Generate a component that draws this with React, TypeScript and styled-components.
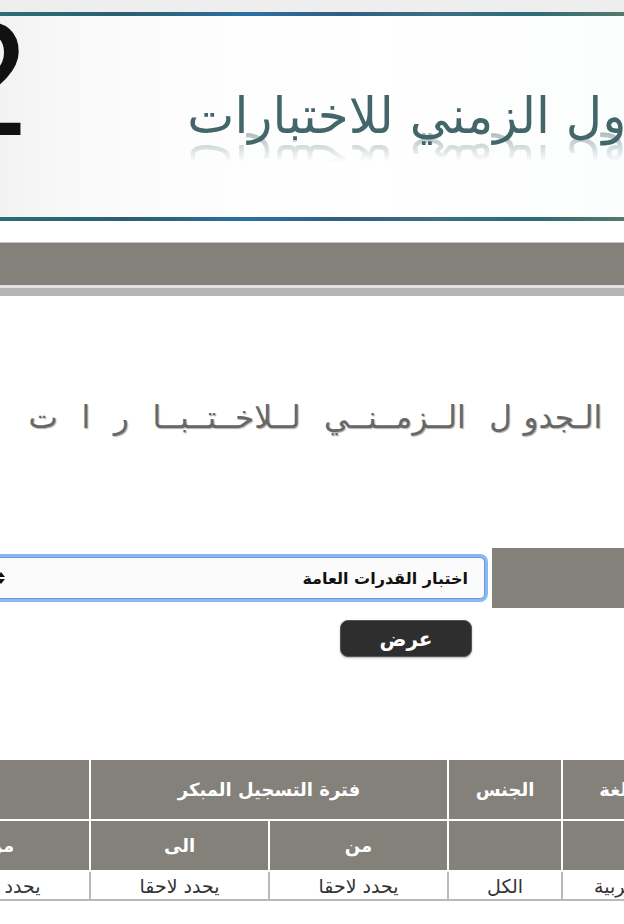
import React from 'react';
import styled, { createGlobalStyle } from 'styled-components';

const GlobalStyle = createGlobalStyle`
  html, body {
    margin: 0;
    padding: 0;
    background: #fff;
  }
  body {
    font-family: "DejaVu Sans", "Noto Sans", sans-serif;
  }
`;

const Page = styled.div`
  width: 624px;
  height: 924px;
  overflow: hidden;
  direction: rtl;
  background: #fff;
`;

const TopStrip = styled.div`
  height: 12px;
  background: #eeeeee;
`;

const Banner = styled.div`
  height: 201px;
  display: flex;
  justify-content: space-between;
  align-items: flex-start;
  border-top: 4px solid #2b6872;
  border-bottom: 4px solid #2b6872;
  border-image: linear-gradient(90deg, #2c6d76 0%, #2a5f70 20%, #2d6fa3 40%, #2f5e82 55%, #3a6f86 70%, #2e6a78 85%, #557a6a 100%) 1;
  background: linear-gradient(90deg, #f2f2f2 0%, #f8f8f8 10%, #fdfdfd 30%, #ffffff 60%, #fcfdfd 100%);
  overflow: hidden;
`;

const BannerTitle = styled.div`
  margin-top: 69px;
  margin-right: -90px;
  font-size: 50px;
  line-height: 62px;
  color: #42666a;
  white-space: nowrap;
  -webkit-box-reflect: below -16px linear-gradient(transparent 50%, rgba(255, 255, 255, 0.45));
`;

const BigDigit = styled.div`
  margin-top: -19px;
  margin-left: -62px;
  font-family: "Liberation Sans", Arial, sans-serif;
  font-size: 163px;
  line-height: 1;
  color: #111;
`;

const NavBar = styled.div`
  margin-top: 21px;
  height: 42px;
  background: #83817a;
  border-top: 1px solid #c4c4c4;
`;

const NavShade = styled.div`
  height: 8px;
  background: #b4b4b4;
  border-top: 3px solid #e2e2e2;
`;

const PageTitle = styled.h1`
  margin: 96px 22px 0 0;
  font-size: 31px;
  font-weight: normal;
  word-spacing: 2px;
  color: #676767;
  text-shadow: 1px 1px 1px #b0b0b0;
  white-space: pre;
  line-height: 50px;
`;

const FormRow = styled.div`
  margin-top: 106px;
  display: flex;
  align-items: center;
  gap: 7px;
  margin-right: -58px;
`;

const FieldLabel = styled.div`
  flex-shrink: 0;
  width: 190px;
  height: 60px;
  background: #83817a;
`;

const SelectBox = styled.div`
  flex-shrink: 0;
  width: 520px;
  height: 42px;
  box-sizing: border-box;
  display: flex;
  align-items: center;
  justify-content: space-between;
  padding: 0 16px 0 30px;
  background: #fbfbfb;
  border: 1px solid #6c9ad8;
  border-radius: 5px;
  box-shadow: 0 0 0 3px #8cb8f2;
  font-size: 16px;
  font-weight: bold;
  color: #111;
`;

const ButtonRow = styled.div`
  margin-top: 12px;
  padding-right: 152px;
`;

const ShowButton = styled.button`
  width: 132px;
  height: 37px;
  background: #2e2e2e;
  border: 1px solid #555;
  border-radius: 8px;
  color: #fff;
  font-family: "DejaVu Sans", sans-serif;
  font-size: 20px;
  font-weight: bold;
  box-shadow: 0 1px 2px rgba(0, 0, 0, 0.3);
`;

const Schedule = styled.table`
  margin-top: 101px;
  margin-right: -55px;
  border-collapse: collapse;
  table-layout: fixed;
  width: 946px;
`;

const Col = styled.col<{ $w: number }>`
  width: ${p => p.$w}px;
`;

const HeadCell = styled.th<{ $tall?: boolean }>`
  background: #83817a;
  color: #fff;
  font-size: 18px;
  font-weight: bold;
  border: 2px solid #fff;
  padding: 0;
  height: ${p => (p.$tall ? 59 : 49)}px;
  text-align: center;
`;

const DataCell = styled.td`
  height: 27px;
  padding: 0;
  text-align: center;
  font-size: 19px;
  color: #333;
  border-left: 2px solid #b9b9b9;
  border-right: 2px solid #b9b9b9;
  border-bottom: 2px solid #b9b9b9;
`;

const Arrows = () => (
  <svg width="10" height="14" viewBox="0 0 10 14">
    <path d="M5 1 L9 6 H1 Z" fill="#111" />
    <path d="M5 13 L9 8 H1 Z" fill="#111" />
  </svg>
);

export default function App() {
  return (
    <>
      <GlobalStyle />
      <Page>
        <TopStrip />
        <Banner>
          <BannerTitle>الجدول الزمني للاختبارات</BannerTitle>
          <BigDigit>2</BigDigit>
        </Banner>
        <NavBar />
        <NavShade />
        <PageTitle>{'الـجدو ل  الــزمــنــي  لــلاخــتــبــا  ر  ا  ت'}</PageTitle>
        <FormRow>
          <FieldLabel />
          <SelectBox>
            <span>اختبار القدرات العامة</span>
            <Arrows />
          </SelectBox>
        </FormRow>
        <ButtonRow>
          <ShowButton>عرض</ShowButton>
        </ButtonRow>
        <Schedule>
          <colgroup>
            <Col $w={116} />
            <Col $w={114} />
            <Col $w={179} />
            <Col $w={179} />
            <Col $w={179} />
            <Col $w={179} />
          </colgroup>
          <thead>
            <tr>
              <HeadCell $tall>اللغة</HeadCell>
              <HeadCell $tall>الجنس</HeadCell>
              <HeadCell $tall colSpan={2}>فترة التسجيل المبكر</HeadCell>
              <HeadCell $tall colSpan={2}>فترة الاختبار</HeadCell>
            </tr>
            <tr>
              <HeadCell />
              <HeadCell />
              <HeadCell>من</HeadCell>
              <HeadCell>الى</HeadCell>
              <HeadCell>من</HeadCell>
              <HeadCell>الى</HeadCell>
            </tr>
          </thead>
          <tbody>
            <tr>
              <DataCell>العربية</DataCell>
              <DataCell>الكل</DataCell>
              <DataCell>يحدد لاحقا</DataCell>
              <DataCell>يحدد لاحقا</DataCell>
              <DataCell>يحدد لاحقا</DataCell>
              <DataCell>يحدد لاحقا</DataCell>
            </tr>
          </tbody>
        </Schedule>
      </Page>
    </>
  );
}
